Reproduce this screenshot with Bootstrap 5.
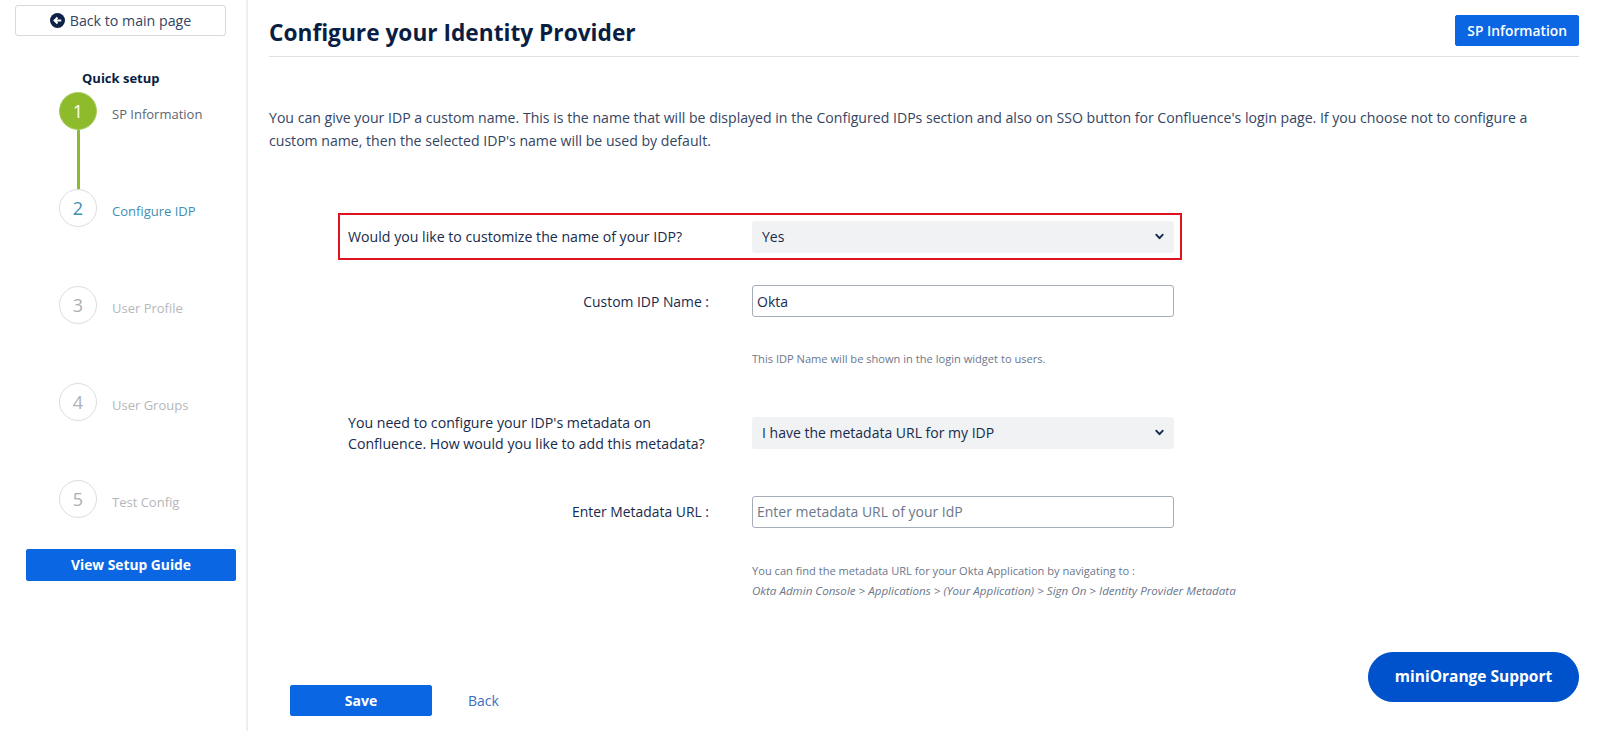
<!DOCTYPE html>
<html lang="en"><head><meta charset="utf-8">
<link href="https://cdn.jsdelivr.net/npm/bootstrap@5.3.0/dist/css/bootstrap.min.css" rel="stylesheet">
<script src="https://cdn.jsdelivr.net/npm/bootstrap@5.3.0/dist/js/bootstrap.bundle.min.js"></script>
<style>
html,body{height:731px;overflow:hidden}
body{font-family:"Open Sans","Liberation Sans",sans-serif;font-size:14px;color:#172b4d;background:#fff}
.side-pane{width:248px;height:731px;border-right:2px solid #eceef1;padding:5px 0 0 15px;flex:none}
.back-btn{width:211px;height:31px;border:1px solid #d5d8dc;border-radius:3px;font-size:14.2px;color:#344563;background:#fff;padding:0;line-height:28px}
.back-ico{width:15px;height:15px;margin-right:5px;vertical-align:-2px}
.quick{font-weight:700;font-size:13px;margin:33px 0 5px 67px;line-height:18px;color:#091e42}
.step-row{height:97px;margin-left:44px;position:relative;display:flex;gap:15px}
.step-num{width:38px;height:38px;border-radius:50%;border:1px solid #dcdddf;display:flex;align-items:center;justify-content:center;font-size:18px;color:#adb0b3;background:#fff;position:relative;z-index:1;flex:none}
.step-row.done .step-num{background:#8dbb2c;border-color:#a9cc62;color:#fff}
.step-row.done::after{content:"";position:absolute;left:18px;top:30px;width:3px;height:70px;background:#8dbb2c}
.step-row.now .step-num{color:#3d8fb5}
.step-lab{font-size:13px;color:#b4b7bb;padding-top:13px;line-height:18px}
.step-row.done .step-lab{color:#5e6670}
.step-row.now .step-lab{color:#3d8fb5}
.step-last{height:69px}
.guide-btn{width:210px;height:32px;margin:0 0 0 11px;--bs-btn-bg:#0b66e4;--bs-btn-border-color:#0b66e4;border-radius:2px;font-weight:700;font-size:13.8px;padding:0}
.main-pane{padding:0 21px 0 21px;flex:1;position:relative;min-width:0}
.head-row{height:57px;border-bottom:1px solid #dfe1e6;padding-top:15px}
.page-title{font-size:22.7px;font-weight:700;color:#091e42;margin:4px 0 0;line-height:28px}
.sp-btn{--bs-btn-bg:#0b66e4;--bs-btn-border-color:#0b66e4;border-radius:2px;font-weight:600;font-size:13.8px;height:31px;padding:1px 11px 0}
.intro{margin:50px 0 0;line-height:22.5px;font-size:14.1px;color:#344563}
.form-box{width:844px;margin:61px 0 0 69px}
.hl-row{border:2px solid #e0141e;height:47px;display:flex;align-items:center;padding-left:8px}
.f-row{display:flex;align-items:center;padding-left:10px}
.f-lab{width:404px;flex:none;font-size:14.15px;line-height:21px;color:#172b4d;margin:0}
.f-lab-r{text-align:right;padding-right:43px;font-size:13.9px}
.f-sel{width:422px;height:32px;flex:none;background-color:#f1f2f4;border:0;border-radius:3px;font-size:14px;color:#172b4d;padding:0 10px;line-height:32px;background-size:9px 9px;background-position:right 10px center;background-image:url("data:image/svg+xml,%3csvg xmlns='http://www.w3.org/2000/svg' viewBox='0 0 16 16'%3e%3cpath fill='none' stroke='%23172b4d' stroke-width='3.6' stroke-linecap='round' stroke-linejoin='round' d='M2.5 5l5.5 6 5.5-6'/%3e%3c/svg%3e")}
.f-inp{width:422px;height:32px;flex:none;border:1px solid #a5adba;border-radius:3px;font-size:14px;padding:0 4px;color:#172b4d}
.f-inp::placeholder{color:#6b778c;opacity:1}
.note{font-size:11.1px;color:#6b778c;margin-left:414px;line-height:20.5px;white-space:nowrap}
.note em{font-size:11.6px}
.gap-a{margin-top:25px}
.gap-b{margin-top:32px}
.gap-c{margin-top:41px;height:44px}
.gap-d{margin-top:41px}
.gap-e{margin-top:33px}
.bottom-row{margin:83.5px 0 0 21px;display:flex;align-items:center;gap:36px}
.save-btn{width:142px;height:31px;--bs-btn-bg:#0b66e4;--bs-btn-border-color:#0b66e4;border-radius:2px;font-weight:700;font-size:14px;padding:0}
.back-link{color:#3b6fc4;text-decoration:none;font-size:14px}
.support{position:absolute;left:1368px;top:652px;width:211px;height:50px;border-radius:25px;--bs-btn-bg:#0052cc;--bs-btn-border-color:#0052cc;font-weight:700;font-size:15.5px;padding:0}
</style></head><body>
<div class="d-flex">
<div class="side-pane">
<button class="btn back-btn d-block"><svg class="back-ico" viewBox="0 0 16 16"><circle cx="8" cy="8" r="8" fill="#0e2148"/><path d="M12 8H5M8 4.8 4.8 8 8 11.2" fill="none" stroke="#fff" stroke-width="2"/></svg>Back to main page</button>
<div class="quick">Quick setup</div>
<div class="step-row done"><div class="step-num">1</div><div class="step-lab">SP Information</div></div>
<div class="step-row now"><div class="step-num">2</div><div class="step-lab">Configure IDP</div></div>
<div class="step-row"><div class="step-num">3</div><div class="step-lab">User Profile</div></div>
<div class="step-row"><div class="step-num">4</div><div class="step-lab">User Groups</div></div>
<div class="step-row step-last"><div class="step-num">5</div><div class="step-lab">Test Config</div></div>
<button class="btn btn-primary guide-btn">View Setup Guide</button>
</div>
<div class="main-pane">
<div class="head-row d-flex justify-content-between align-items-start"><h1 class="page-title">Configure your Identity Provider</h1><button class="btn btn-primary sp-btn">SP Information</button></div>
<p class="intro">You can give your IDP a custom name. This is the name that will be displayed in the Configured IDPs section and also on SSO button for Confluence's login page. If you choose not to configure a custom name, then the selected IDP's name will be used by default.</p>
<div class="form-box">
<div class="hl-row"><label class="f-lab">Would you like to customize the name of your IDP?</label><select class="form-select f-sel"><option>Yes</option></select></div>
<div class="f-row gap-a"><label class="f-lab f-lab-r">Custom IDP Name :</label><input class="form-control f-inp" value="Okta"></div>
<div class="note gap-b">This IDP Name will be shown in the login widget to users.</div>
<div class="f-row gap-c"><label class="f-lab">You need to configure your IDP's metadata on<br>Confluence. How would you like to add this metadata?</label><select class="form-select f-sel"><option>I have the metadata URL for my IDP</option></select></div>
<div class="f-row gap-d"><label class="f-lab f-lab-r">Enter Metadata URL :</label><input class="form-control f-inp" placeholder="Enter metadata URL of your IdP"></div>
<div class="note gap-e">You can find the metadata URL for your Okta Application by navigating to :<br><em>Okta Admin Console &gt; Applications &gt; (Your Application) &gt; Sign On &gt; Identity Provider Metadata</em></div>
</div>
<div class="bottom-row"><button class="btn btn-primary save-btn">Save</button><a class="back-link" href="#">Back</a></div>
</div>
</div>
<button class="btn btn-primary support">miniOrange Support</button>
</body></html>
